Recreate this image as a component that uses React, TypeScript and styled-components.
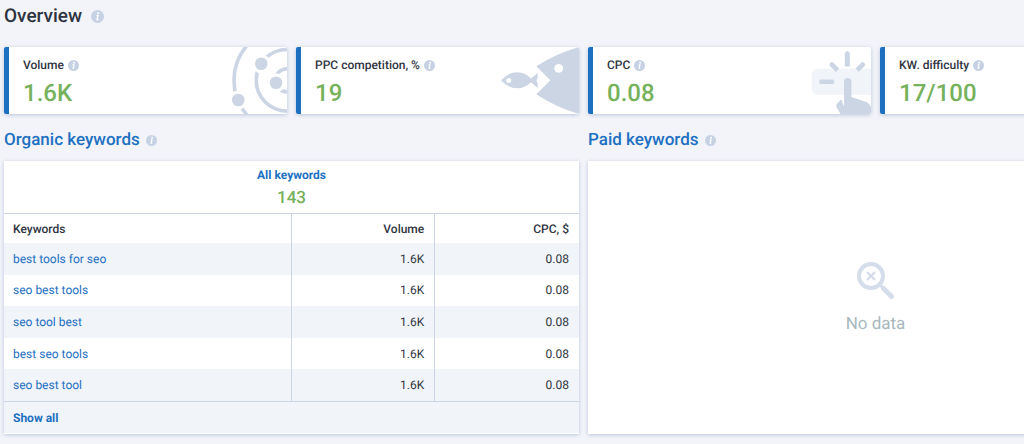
import React from "react";
import styled, { createGlobalStyle } from "styled-components";

const color = {
  page: "#f3f4f9",
  stripe: "#f1f4f9",
  line: "#cbd5e5",
  art: "#cbd5e3",
  ink: "#2f3441",
  blue: "#1d70c1",
  green: "#76b15c",
};

const GlobalStyle = createGlobalStyle`
  * { box-sizing: border-box; }
  body {
    margin: 0;
    background: ${color.page};
    color: ${color.ink};
    font-family: Roboto, "Liberation Sans", sans-serif;
    font-size: 12px;
    line-height: 16px;
    text-rendering: geometricPrecision;
    overflow-x: hidden;
  }
`;

const Page = styled.main`
  padding: 4px 4px 10px;
  overflow: hidden;
`;

const TitleRow = styled.div`
  display: flex;
  align-items: center;
  gap: 9px;
  height: 24px;
`;

const Title = styled.h1`
  margin: 0;
  font-size: 19px;
  font-weight: 500;
  line-height: 24px;
`;

const Cards = styled.div`
  display: grid;
  grid-template-columns: repeat(4, minmax(283px, 1fr));
  gap: 9px;
  margin-top: 19px;
`;

const Card = styled.section`
  display: flex;
  justify-content: space-between;
  height: 67px;
  overflow: hidden;
  background: #fff;
  border-left: 5px solid ${color.blue};
  border-radius: 2px;
  box-shadow: 0 1px 4px #b9c6dc;
`;

const CardText = styled.div`
  padding: 10px 0 0 14px;
`;

const CardLabel = styled.h2`
  display: flex;
  align-items: center;
  gap: 4px;
  margin: 0;
  font-size: 12px;
  font-weight: 500;
  line-height: 16px;
`;

const CardValue = styled.div`
  margin-top: 6px;
  color: ${color.green};
  font-size: 24px;
  font-weight: 500;
  line-height: 28px;
`;

const Panels = styled.div`
  display: grid;
  grid-template-columns: repeat(2, minmax(575px, 1fr));
  gap: 9px;
  margin-top: 14px;
`;

const Column = styled.section`
  display: flex;
  flex-direction: column;
`;

const PanelHeading = styled.h2`
  display: flex;
  align-items: center;
  gap: 6px;
  margin: 0 0 9px;
  color: ${color.blue};
  font-size: 17px;
  font-weight: 500;
  line-height: 24px;
`;

const PanelLink = styled.a`
  color: inherit;
  text-decoration: none;
`;

const Panel = styled.div`
  flex: 1;
  background: #fff;
  box-shadow: 0 1px 4px #b9c6dc;
`;

const Summary = styled.div`
  height: 53px;
  padding-top: 6px;
  text-align: center;
  border-bottom: 1px solid ${color.line};
`;

const SummaryLink = styled.a`
  display: block;
  color: ${color.blue};
  font-size: 12px;
  font-weight: 700;
  line-height: 16px;
  text-decoration: none;
`;

const SummaryCount = styled.div`
  margin-top: 4px;
  color: ${color.green};
  font-size: 17px;
  font-weight: 500;
  line-height: 22px;
`;

const Table = styled.table`
  width: 100%;
  height: 187px;
  table-layout: fixed;
  border-collapse: separate;
  border-spacing: 0;
  font-size: 12px;
`;

const Row = styled.tr`
  &:nth-child(odd) { background: ${color.stripe}; }
`;

const HeadCell = styled.th<{ $numeric?: boolean }>`
  width: ${(p) => (p.$numeric ? "25%" : "50%")};
  height: 29px;
  padding: 0 10px 0 9px;
  font-weight: 500;
  text-align: ${(p) => (p.$numeric ? "right" : "left")};
  &:not(:last-child) { border-right: 1px solid ${color.line}; }
`;

const Cell = styled.td<{ $numeric?: boolean }>`
  padding: 0 10px 0 9px;
  text-align: ${(p) => (p.$numeric ? "right" : "left")};
  &:not(:last-child) { border-right: 1px solid ${color.line}; }
`;

const KeywordLink = styled.a`
  color: ${color.blue};
  text-decoration: none;
`;

const Footer = styled.div`
  display: flex;
  align-items: center;
  height: 33px;
  padding: 0 9px;
  background: ${color.stripe};
  border-top: 1px solid ${color.line};
  border-bottom: 1px solid #fff;
`;

const ShowAll = styled.a`
  color: ${color.blue};
  font-weight: 700;
  text-decoration: none;
`;

const Empty = styled.div`
  display: flex;
  flex-direction: column;
  align-items: center;
  justify-content: center;
  gap: 12px;
  height: 100%;
  color: #a8b8bd;
  font-size: 17px;
  line-height: 22px;
`;

const InfoMark = styled.svg`
  flex: none;
`;

function Info({ size = 11 }: { size?: number }) {
  return (
    <InfoMark width={size} height={size} viewBox="0 0 12 12" role="img" aria-label="More information">
      <circle cx="6" cy="6" r="6" fill="#c6d2e4" />
      <circle cx="6.7" cy="3" r="1" fill="#fff" />
      <path d="M5 5.2H6.5L5.6 9H6.9" fill="none" stroke="#fff" strokeWidth="1.3" />
    </InfoMark>
  );
}

function RadarArt() {
  return (
    <svg width="56" height="67" viewBox="0 0 56 67" aria-hidden="true">
      <g fill="none" stroke={color.art} strokeWidth="3.6">
        <circle cx="56" cy="33.3" r="53" />
        <circle cx="56" cy="33.3" r="30.8" />
        <circle cx="56" cy="33.3" r="11.6" />
      </g>
      <g fill={color.art} stroke="#fff" strokeWidth="6.4" paintOrder="stroke">
        <circle cx="30.3" cy="16.7" r="6.3" />
        <circle cx="45" cy="35.7" r="6.3" />
        <circle cx="7.3" cy="53" r="6.3" />
      </g>
    </svg>
  );
}

function FishArt() {
  return (
    <svg width="79" height="67" viewBox="0 0 79 67" aria-hidden="true">
      <path
        d="M79 0Q55 7 36.3 19.3L50.3 33.3L36.3 47.3Q56 60.5 79 67Z"
        fill={color.art}
      />
      <circle cx="58.7" cy="21.3" r="4.4" fill="#fff" />
      <path
        d="M1 33.3Q8 25.3 17.3 25.3Q25 25.3 31 31.5Q34 29 37.7 26V31Q35.5 33.3 37.7 36V41Q34 38 31 35.3Q25 41.3 17.3 41.3Q8 41.3 1 33.3Z"
        fill={color.art}
      />
      <circle cx="8.7" cy="33.4" r="2.5" fill="#fff" />
    </svg>
  );
}

function TapArt() {
  return (
    <svg width="60" height="67" viewBox="0 0 60 67" aria-hidden="true">
      <rect x="0.7" y="21.7" width="70" height="26" rx="6" fill="#f1f4f9" />
      <g fill={color.art}>
        <rect x="8.3" y="32.6" width="14.8" height="4.4" rx="1.6" />
        <path d="M33.8 19.4V6.8a2.5 2.5 0 0 1 5 0V19.4Z" />
        <path d="M19.2 19.3a2.4 2.4 0 0 1 3.4-3.4L28.3 21.5L25 25Z" />
        <path d="M53.4 19.3a2.4 2.4 0 0 0-3.4-3.4L44.5 21.5L47.8 25Z" />
        <path d="M33 59V34.7a3.7 3.7 0 0 1 7.4 0V50L54 54.4Q60 56.5 60 62V67H29.5Q27.5 63.5 25.4 60.3Q24.6 58.7 25.8 57L29.2 53.2Q30.5 52.2 31 54Q31.5 57 33 59Z" />
      </g>
    </svg>
  );
}

function NoDataIcon() {
  return (
    <svg width="40" height="40" viewBox="0 0 40 40" fill="none" stroke="#d6ddea" aria-hidden="true">
      <circle cx="15" cy="15" r="12" strokeWidth="4" />
      <path d="M11.6 11.6L18.4 18.4M18.4 11.6L11.6 18.4" strokeWidth="2.3" strokeLinecap="round" />
      <path d="M27.5 27.5L35.6 35.6" strokeWidth="5" strokeLinecap="round" />
      <path d="M24.5 24.5L28 28" strokeWidth="3" />
    </svg>
  );
}

const metrics = [
  { label: "Volume", value: "1.6K", art: <RadarArt /> },
  { label: "PPC competition, %", value: "19", art: <FishArt /> },
  { label: "CPC", value: "0.08", art: <TapArt /> },
  { label: "KW. difficulty", value: "17/100", art: null },
];

const keywords = [
  "best tools for seo",
  "seo best tools",
  "seo tool best",
  "best seo tools",
  "seo best tool",
];

export default function App() {
  return (
    <>
      <GlobalStyle />
      <Page>
        <TitleRow>
          <Title>Overview</Title>
          <Info size={13} />
        </TitleRow>
        <Cards>
          {metrics.map((m) => (
            <Card key={m.label}>
              <CardText>
                <CardLabel>
                  {m.label}
                  <Info />
                </CardLabel>
                <CardValue>{m.value}</CardValue>
              </CardText>
              {m.art}
            </Card>
          ))}
        </Cards>
        <Panels>
          <Column>
            <PanelHeading>
              <PanelLink href="#organic">Organic keywords</PanelLink>
              <Info />
            </PanelHeading>
            <Panel>
              <Summary>
                <SummaryLink href="#all">All keywords</SummaryLink>
                <SummaryCount>143</SummaryCount>
              </Summary>
              <Table>
                <thead>
                  <tr>
                    <HeadCell scope="col">Keywords</HeadCell>
                    <HeadCell scope="col" $numeric>Volume</HeadCell>
                    <HeadCell scope="col" $numeric>CPC, $</HeadCell>
                  </tr>
                </thead>
                <tbody>
                  {keywords.map((k) => (
                    <Row key={k}>
                      <Cell><KeywordLink href="#keyword">{k}</KeywordLink></Cell>
                      <Cell $numeric>1.6K</Cell>
                      <Cell $numeric>0.08</Cell>
                    </Row>
                  ))}
                </tbody>
              </Table>
              <Footer>
                <ShowAll href="#show-all">Show all</ShowAll>
              </Footer>
            </Panel>
          </Column>
          <Column>
            <PanelHeading>
              <PanelLink href="#paid">Paid keywords</PanelLink>
              <Info />
            </PanelHeading>
            <Panel>
              <Empty>
                <NoDataIcon />
                No data
              </Empty>
            </Panel>
          </Column>
        </Panels>
      </Page>
    </>
  );
}
